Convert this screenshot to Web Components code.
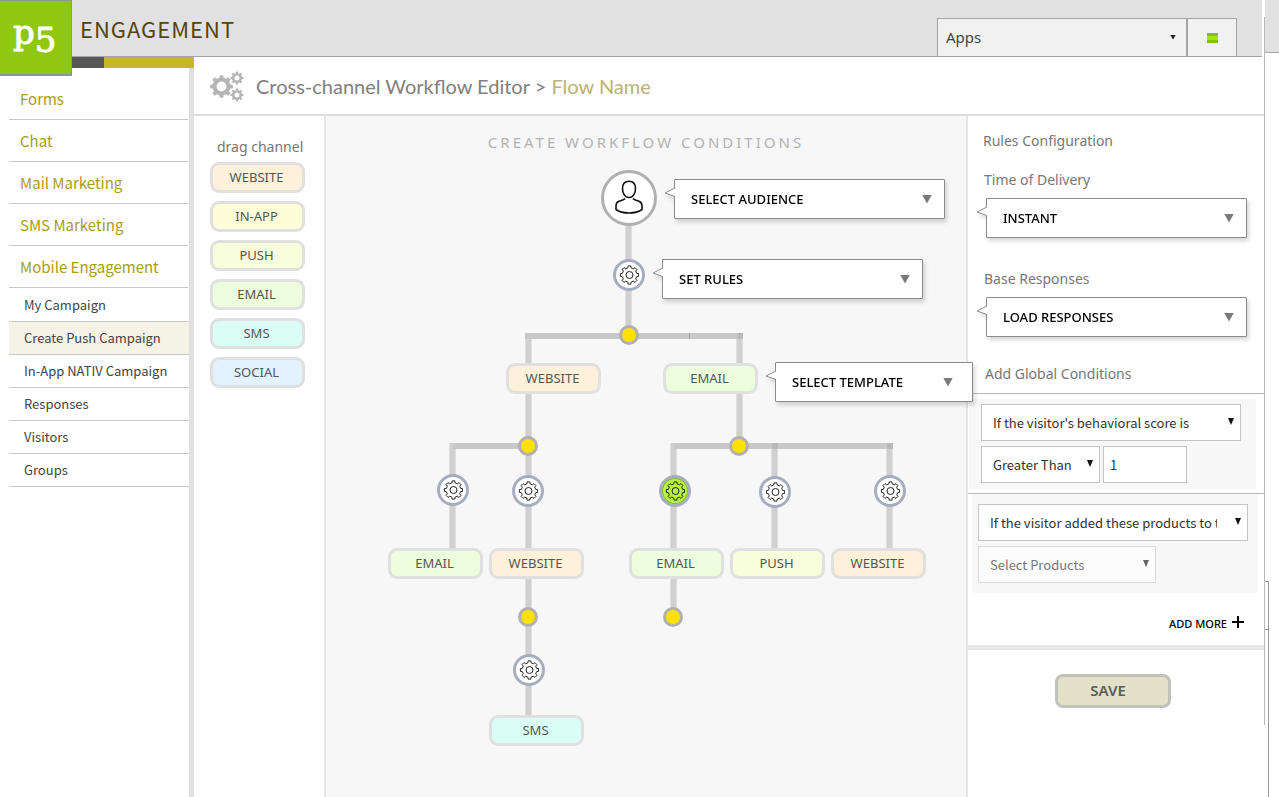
<!DOCTYPE html>
<html lang="en">
<head>
<meta charset="utf-8">
<title>Cross-channel Workflow Editor</title>
<style>
body { margin: 0; background: #fff; font-family: "Open Sans", "Noto Sans", sans-serif; }
</style>
</head>
<body>
<wf-page></wf-page>

<script>
const ui = '"Noto Sans", "Open Sans", sans-serif';
const src = '"Noto Sans CJK SC", "Noto Sans", sans-serif';

function define(name, render) {
  customElements.define(name, class extends HTMLElement {
    constructor() {
      super();
      this.attachShadow({ mode: 'open' });
    }
    connectedCallback() {
      if (this.shadowRoot.childNodes.length) return;
      const t = document.createElement('template');
      t.innerHTML = '<style>*{box-sizing:border-box}</style>' + render(this);
      this.shadowRoot.append(t.content.cloneNode(true));
    }
  });
}

/* Closed outline of a cog with the given centre, radii and tooth count. */
function cog(cx, cy, outer, inner, teeth) {
  const step = Math.PI * 2 / teeth;
  const p = (r, a) => (cx + r * Math.sin(a)).toFixed(2) + ' ' + (cy - r * Math.cos(a)).toFixed(2);
  let d = '';
  for (let i = 0; i < teeth; i++) {
    const a = i * step;
    d += (i ? 'L' : 'M') + p(inner, a - step * 0.29) + 'L' + p(outer, a - step * 0.19)
      + 'L' + p(outer, a + step * 0.19) + 'L' + p(inner, a + step * 0.29);
  }
  return d + 'Z';
}
const hole = (cx, cy, r) => `M${cx - r} ${cy}a${r} ${r} 0 1 0 ${2 * r} 0a${r} ${r} 0 1 0 ${-2 * r} 0Z`;

define('wf-logo', () => `
<style>
:host { display: block; width: 72px; height: 76px; }
a { display: block; height: 76px; padding-left: 13px; background: #8fc811; border: solid #8a9a8a; border-width: 1px 1px 2px 0;
  color: #fff; font: 34px/62px "DejaVu Serif", serif; text-decoration: none; white-space: nowrap; -webkit-text-stroke: 1px #fff; }
b { font-weight: 400; vertical-align: -8px; line-height: 0; }
</style>
<a href="#home">p<b>5</b></a>`);

define('wf-topbar', () => `
<style>
:host { display: flex; height: 57px; background: #e1e1e1; border-bottom: 1px solid #a5a5a5; position: relative; z-index: 2; }
h1 { margin: 0 auto 0 8px; color: #54450f; font: 400 22px/56px ${src}; letter-spacing: 1px; }
.apps { display: grid; width: 250px; margin-top: 18px; }
.apps > * { grid-area: 1/1; }
select { appearance: none; width: 100%; height: 38px; margin: 0; padding: 0 30px 2px 8px; border: solid #a3a3a3; border-width: 1px 1px 0 1px; border-radius: 0;
  background: #f1f1f1; color: #444; font: 15px ${ui}; }
i { width: 6px; height: 5px; margin-right: 11px; place-self: center end; background: #222; clip-path: polygon(0 0,100% 0,50% 100%); pointer-events: none; }
button { width: 50px; margin: 18px 25px 0 0; padding: 0; border: solid #a3a3a3; border-width: 1px 1px 0 1px; background: #f1f1f1; display: grid; place-items: center; }
</style>
<wf-logo></wf-logo>
<h1>ENGAGEMENT</h1>
<div class="apps"><select aria-label="Apps"><option>Apps</option></select><i></i></div>
<button aria-label="Menu"><svg width="11" height="10"><path fill="#a3e413" d="M0 0h11v10H0z"/><path fill="#86bb1f" d="M0 0h11v3H0zM0 7h11v3H0z"/></svg></button>`);

define('wf-sidebar', () => `
<style>
:host { display: flex; flex-direction: column; }
.stripe { height: 11px; background: linear-gradient(90deg, #575757 104px, #c8b52b 104px); }
nav { flex: 1; padding: 10px 0 0 9px; border-right: 5px solid #e0e0e0; }
ul { margin: 0; padding: 0; list-style: none; }
a { display: block; color: inherit; text-decoration: none; border-bottom: 1px solid #c9c9c9; }
.top a { padding-left: 11px; margin-right: 1px; color: #a89c18; font: 15px/41px ${src}; }
.sub { padding-top: 1px; }
.sub a { padding-left: 15px; color: #444; font: 13px/32px ${src}; }
.sub a[aria-current] { background: #f5f3e6; }
</style>
<div class="stripe"></div>
<nav>
<ul class="top"><li><a href="#forms">Forms</a></li><li><a href="#chat">Chat</a></li><li><a href="#mail">Mail Marketing</a></li><li><a href="#sms">SMS Marketing</a></li><li><a href="#mobile">Mobile Engagement</a></li></ul>
<ul class="sub"><li><a href="#my">My Campaign</a></li><li><a href="#push" aria-current="page">Create Push Campaign</a></li><li><a href="#inapp">In-App NATIV Campaign</a></li><li><a href="#responses">Responses</a></li><li><a href="#visitors">Visitors</a></li><li><a href="#groups">Groups</a></li></ul>
</nav>`);

define('wf-title', () => `
<style>
:host { display: flex; align-items: center; gap: 12px; height: 59px; padding-left: 16px; border-bottom: 2px solid #dcdcdc; }
h2 { margin: 0; color: #808080; font: 400 20px/30px Lato, sans-serif; }
::slotted(span) { color: #bab274; }
</style>
<svg width="34" height="32" viewBox="0 0 34 32" fill="#b5b5b5" fill-rule="evenodd" aria-hidden="true">
<path d="${cog(11.5, 16.5, 11.4, 9, 8)}${hole(11.5, 16.5, 4.9)}"/><path d="${cog(27, 8, 6.6, 5, 8)}${hole(27, 8, 2.5)}"/><path d="${cog(27, 25, 6.6, 5, 8)}${hole(27, 25, 2.5)}"/></svg>
<h2><slot></slot></h2>`);

const tones = { website: '#fff1d9', 'in-app': '#fdfed8', push: '#f8fedb', email: '#ecfedb', sms: '#dafef6', social: '#e2f3fd' };
define('wf-chip', el => `
<style>
:host { display: block; width: 95px; }
button { display: block; width: 100%; height: 31px; margin: 0; padding: 0 2px 0 0; border: 3px solid #e0e0e0; border-radius: 9px;
  background: ${tones[el.getAttribute('kind')]}; color: #555; font: 13px/23px ${ui}; }
</style>
<button draggable="true"><slot></slot></button>`);

define('wf-palette', () => `
<style>
:host { display: flex; flex-direction: column; gap: 8px; padding: 21px 0 0 16px; border-right: 2px solid #e4e4e4; }
h3 { margin: 0 0 -3px 7px; color: #777; font: 400 14px/20px ${ui}; }
</style>
<h3>drag channel</h3>
<slot></slot>`);

define('wf-callout', el => `
<style>
:host { display: block; }
label { display: block; margin: 0 0 8px -2px; color: #777; font: 14px/20px ${ui}; }
.box { display: grid; position: relative; filter: drop-shadow(2px 3px 2px rgba(0,0,0,.16)); }
.box > * { grid-area: 1/1; }
select { appearance: none; width: 100%; height: 40px; margin: 0; padding: 0 40px 0 16px; border: 1px solid #8b8b8b; border-radius: 1px;
  background: #fff; color: #000; font: 500 13px ${ui}; }
i { width: 10px; height: 9px; place-self: center end; margin-right: ${el.getAttribute('inset') || 13}px; background: #7a7a7a; clip-path: polygon(0 0,100% 0,50% 100%); pointer-events: none; }
.tail { position: absolute; left: -10px; top: 8px; }
</style>
${el.hasAttribute('label') ? `<label for="s">${el.getAttribute('label')}</label>` : ''}
<div class="box">
<select id="s" ${el.hasAttribute('label') ? '' : `aria-label="${el.getAttribute('value')}"`}><option>${el.getAttribute('value')}</option></select><i></i>
<svg class="tail" width="11" height="11"><path d="M11 1L1 6l10 3.500" fill="#fff" stroke="#8b8b8b"/><path d="M10.500 2v7" stroke="#fff"/></svg>
</div>`);

define('wf-select', el => `
<style>
:host { display: grid; }
select, i { grid-area: 1/1; }
select { appearance: none; width: 100%; height: 37px; margin: 0; padding: 0 25px 0 11px; border: 1px solid #c4c4c4; border-radius: 0;
  background: #fff; color: #333; font: 13px ${src}; }
:host([wide]) select { padding-right: 30px; }
select:disabled { background: #fcfcfc; border-color: #dadada; color: #777; opacity: 1; }
i { width: 6px; height: 7px; place-self: center end; margin: 0 7px 2px 0; background: #111; clip-path: polygon(0 0,100% 0,50% 100%); pointer-events: none; }
select:disabled + i { background: #666; }
</style>
<select aria-label="${el.getAttribute('name')}" ${el.hasAttribute('disabled') ? 'disabled' : ''}><option>${el.getAttribute('value')}</option></select><i></i>`);

define('wf-rule-node', el => `
<style>
:host { display: block; }
button { display: grid; place-items: center; width: 32px; height: 32px; padding: 0; border: 3px solid #a5adc0; border-radius: 50%; background: #fff; }
:host([active]) button { background: #b9f43c; box-shadow: inset 0 0 0 1px #86b432; }
</style>
<button aria-label="Rule"><svg width="20" height="20" fill="none" stroke="#222" stroke-linejoin="round"><path d="${cog(10.5, 10, 9.2, 7.3, 8)}"/><circle cx="10.500" cy="10" r="3.500"/></svg></button>`);

define('wf-junction', () => `
<style>
:host { display: block; width: 20px; height: 20px; box-sizing: border-box; border: 3px solid #b0b0b0; border-radius: 50%; background: #ffe100; }
</style>`);

define('wf-audience', () => `
<style>
:host { display: block; }
button { display: grid; place-items: center; width: 56px; height: 56px; padding: 0 0 2px; border: 3px solid #b0b0b0; border-radius: 50%; background: #fff; }
</style>
<button aria-label="Audience"><svg width="28" height="34" fill="none" stroke="#111" stroke-width="1.600" stroke-linejoin="round">
<path d="M14 1.200c4.500 0 6.500 3 6.500 7.300s-2.200 9-6.500 9-6.500-4.700-6.500-9S9.500 1.200 14 1.200Z"/><path d="M10 18.500Q9 19.800 4 21.200Q1 22.300 1 26v3.500Q5.500 33 14 33t13-3.500V26q0-3.700-3-4.800-5-1.400-6-2.700"/></svg></button>`);

define('wf-canvas', () => `
<style>
:host { display: block; padding-top: 16px; background: #f7f7f7; position: relative; z-index: 1; }
h3 { margin: 0 0 4px; text-align: center; color: #b3b3b3; font: 400 15px/20px ${ui}; letter-spacing: 3px; white-space: nowrap; }
.stage { position: relative; width: 640px; height: 600px; margin: 0 auto; }
::slotted(*) { position: absolute; left: calc(var(--x) * 1px); top: calc(var(--y) * 1px); }
svg { display: block; }
</style>
<h3>CREATE WORKFLOW CONDITIONS</h3>
<div class="stage">
<svg width="640" height="600" fill="none" aria-hidden="true">
<path stroke="#e0e0e0" stroke-width="7" d="M302.500 66V179M202.500 177V559M413.500 177V290M126.500 287V392M347.500 287V461M448.500 287V392M563.500 287V392"/>
<path stroke="#d0d0d0" stroke-width="5" d="M302.500 66V179M202.500 177V559M413.500 177V290M126.500 287V392M347.500 287V461M448.500 287V392M563.500 287V392"/>
<path stroke="#c9c9c9" stroke-width="6" d="M199 180H417M127 290H203M348 290H567"/>
<path stroke="#b9b9b9" stroke-width="6" d="M411 180h6M446 290h6M561 290h6"/><path stroke="#aaa" d="M363.500 177v6"/>
</svg>
<slot></slot>
</div>`);

define('wf-rules', () => `
<style>
:host { display: block; padding-top: 15px; border-left: 2px solid #e4e4e4; color: #777; }
h3 { margin: 0 0 0 15px; font: 400 14px/20px ${ui}; }
wf-callout { margin: 19px 17px 0 18px; }
wf-callout + wf-callout { margin-top: 31px; }
h3.global { margin: 27px 0 0; padding: 0 0 9px 17px; border-bottom: 1px solid #b8b8b8; }
.cond { display: grid; gap: 5px; background: #f7f7f7; }
.score { margin: 5px 8px 4px 1px; padding: 5px 15px 6px 12px; }
.products { margin: 0 6px 0 4px; padding: 10px 10px 10px 6px; }
.row { display: grid; grid-template-columns: 119px 84px; gap: 3px; }
.products .row { grid-template-columns: 178px; }
hr { margin: 0; border: 0; border-top: 1px solid #b8b8b8; }
hr.thick { margin-top: 11px; border-top: 5px solid #e7e7e7; }
input { width: 100%; height: 37px; margin: 0; padding: 0 6px; border: 1px solid #c4c4c4; border-radius: 0; color: #333; font: 13px ${src}; }
.more { display: flex; align-items: center; gap: 5px; margin: 21px 20px 0 auto; padding: 0; border: 0; background: none; color: #000; font: 500 11px/20px ${ui}; }
.more svg { margin-bottom: 4px; }
.save { display: block; width: 116px; height: 34px; margin: 24px 0 24px 87px; padding: 0 10px 3px 0; border: 3px solid #c1c2b9; border-radius: 8px; background: #e3e1c8; color: #5c5c5c; font: 600 15px/20px ${ui}; }
</style>
<h3>Rules Configuration</h3>
<wf-callout label="Time of Delivery" value="INSTANT"></wf-callout>
<wf-callout label="Base Responses" value="LOAD RESPONSES"></wf-callout>
<h3 class="global">Add Global Conditions</h3>
<div class="cond score">
<wf-select wide name="Condition" value="If the visitor's behavioral score is"></wf-select>
<div class="row"><wf-select name="Comparison" value="Greater Than"></wf-select><input aria-label="Score" value="1"></div>
</div>
<hr>
<div class="cond products">
<wf-select wide name="Condition" value="If the visitor added these products to their cart"></wf-select>
<div class="row"><wf-select name="Products" value="Select Products" disabled></wf-select></div>
</div>
<button class="more">ADD MORE<svg width="12" height="12" stroke="#000" stroke-width="2"><path d="M6 0v12M0 6h12"/></svg></button>
<hr class="thick">
<button class="save">SAVE</button>`);

define('wf-rail', () => `
<style>
:host { display: grid; grid-template-columns: 1px 1fr; }
.line { margin: 17px 0 72px; background: #b8b8b8; }
.col { display: flex; flex-direction: column; }
.head { height: 53px; background: #e1e1e1; border-bottom: 1px solid #a5a5a5; }
.box { flex: 1; width: 4px; margin-top: 528px; border: solid #9a9a9a; border-width: 1px 1px 0 0; }
.cell { height: 48px; border-bottom: 1px solid #9a9a9a; }
</style>
<div class="line"></div>
<div class="col"><div class="head"></div><div class="box"><div class="cell"></div></div></div>`);

define('wf-page', () => `
<style>
:host { display: grid; grid-template-columns: 1fr 15px; min-height: 100vh; }
.app { display: grid; grid-template-rows: auto 1fr; min-width: 0; }
wf-topbar { margin-right: 2px; }
.body { display: grid; grid-template-columns: 194px 1fr; }
main { display: grid; grid-template-rows: auto 1fr; min-width: 0; }
.editor { display: grid; grid-template-columns: 132px 1fr 298px; }
</style>
<div class="app">
<wf-topbar></wf-topbar>
<div class="body">
<wf-sidebar></wf-sidebar>
<main>
<wf-title>Cross-channel Workflow Editor &gt; <span>Flow Name</span></wf-title>
<div class="editor">
<wf-palette>
<wf-chip kind="website">WEBSITE</wf-chip>
<wf-chip kind="in-app">IN-APP</wf-chip>
<wf-chip kind="push">PUSH</wf-chip>
<wf-chip kind="email">EMAIL</wf-chip>
<wf-chip kind="sms">SMS</wf-chip>
<wf-chip kind="social">SOCIAL</wf-chip>
</wf-palette>
<wf-canvas>
<wf-audience style="--x:275;--y:14"></wf-audience>
<wf-callout value="SELECT AUDIENCE" style="--x:348;--y:23;width:271px"></wf-callout>
<wf-rule-node style="--x:287;--y:103"></wf-rule-node>
<wf-callout value="SET RULES" style="--x:336;--y:103;width:261px"></wf-callout>
<wf-junction style="--x:293;--y:169"></wf-junction>
<wf-chip kind="website" style="--x:180;--y:207">WEBSITE</wf-chip>
<wf-chip kind="email" style="--x:337;--y:207">EMAIL</wf-chip>
<wf-callout value="SELECT TEMPLATE" inset="20" style="--x:449;--y:206;width:198px"></wf-callout>
<wf-junction style="--x:192;--y:280"></wf-junction>
<wf-junction style="--x:403;--y:280"></wf-junction>
<wf-rule-node style="--x:111;--y:318"></wf-rule-node>
<wf-rule-node style="--x:186;--y:319"></wf-rule-node>
<wf-rule-node active style="--x:333;--y:319"></wf-rule-node>
<wf-rule-node style="--x:433;--y:320"></wf-rule-node>
<wf-rule-node style="--x:548;--y:319"></wf-rule-node>
<wf-chip kind="email" style="--x:62;--y:392">EMAIL</wf-chip>
<wf-chip kind="website" style="--x:163;--y:392">WEBSITE</wf-chip>
<wf-chip kind="email" style="--x:303;--y:392">EMAIL</wf-chip>
<wf-chip kind="push" style="--x:404;--y:392">PUSH</wf-chip>
<wf-chip kind="website" style="--x:505;--y:392">WEBSITE</wf-chip>
<wf-junction style="--x:192;--y:451"></wf-junction>
<wf-junction style="--x:337;--y:451"></wf-junction>
<wf-rule-node style="--x:187;--y:498"></wf-rule-node>
<wf-chip kind="sms" style="--x:163;--y:559">SMS</wf-chip>
</wf-canvas>
<wf-rules></wf-rules>
</div>
</main>
</div>
</div>
<wf-rail></wf-rail>`);
</script>
</body>
</html>
